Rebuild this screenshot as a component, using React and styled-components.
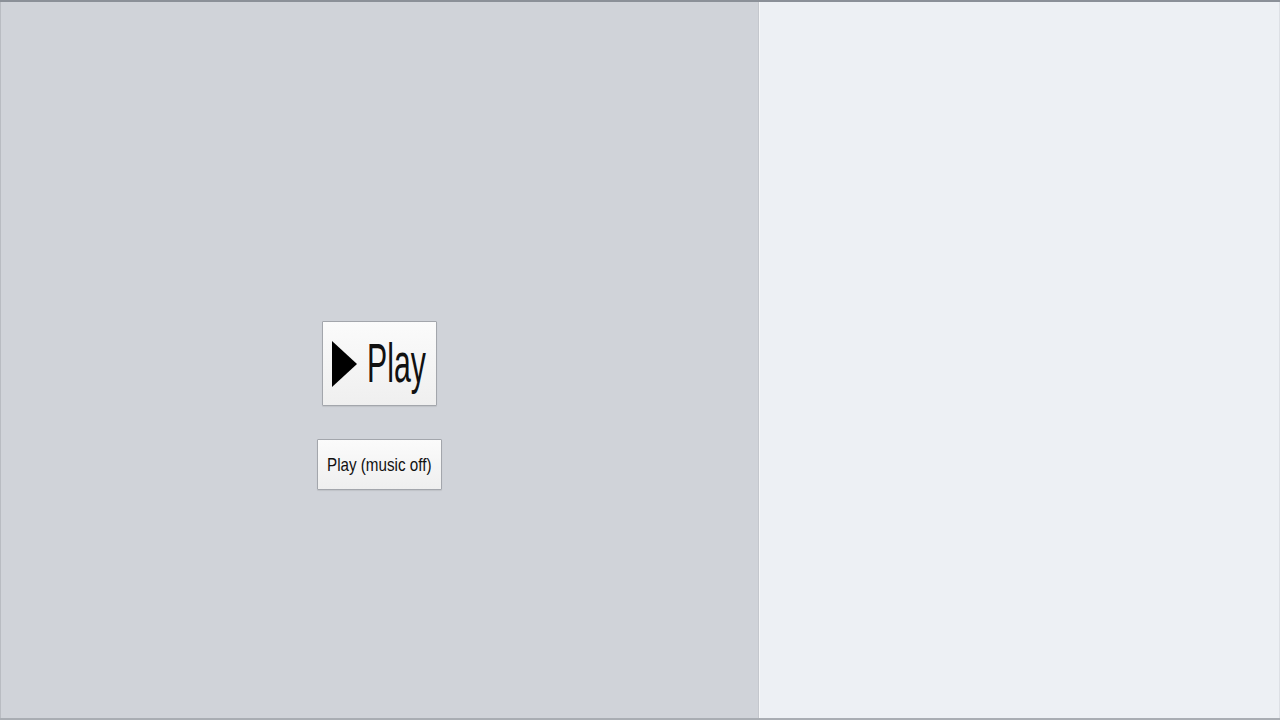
import React from "react";
import styled, { createGlobalStyle } from "styled-components";

const GlobalStyle = createGlobalStyle`
  html, body {
    margin: 0;
    padding: 0;
    height: 100%;
    overflow: hidden;
  }
  #root {
    height: 100%;
  }
`;

const Screen = styled.div`
  display: flex;
  width: 1280px;
  height: 720px;
  box-sizing: border-box;
  border-top: 2px solid #8b9098;
  border-bottom: 2px solid #a9adb3;
  font-family: "Liberation Sans", Arial, sans-serif;
`;

const GamePanel = styled.div`
  width: 759px;
  flex: none;
  box-sizing: border-box;
  border-left: 1px solid #b9bcc2;
  border-right: 1px solid #c4c7cd;
  background: #d0d3d9;
  display: flex;
  flex-direction: column;
  align-items: center;
  padding-top: 319px;
  gap: 33px;
`;

const SidePanel = styled.div`
  flex: 1;
  background: #edf0f4;
  border-left: 1px solid #f6f7f9;
  border-right: 1px solid #dde0e5;
`;

const Button = styled.button`
  display: flex;
  align-items: center;
  justify-content: ${({ $big }) => ($big ? "flex-start" : "center")};
  gap: 10px;
  box-sizing: border-box;
  width: ${({ $big }) => ($big ? "115px" : "125px")};
  height: ${({ $big }) => ($big ? "85px" : "51px")};
  padding: ${({ $big }) => ($big ? "0 0 0 9px" : "0")};
  border: 1px solid #a3a6ac;
  border-radius: 1px;
  background: linear-gradient(#fbfbfb, #efefef);
  box-shadow: 0 1px 1px rgba(0, 0, 0, 0.08);
  color: #111;
  font-family: inherit;
  cursor: pointer;
`;

const Label = styled.span`
  display: inline-block;
  width: ${({ $width }) => $width}px;
  white-space: nowrap;
  font-size: ${({ $size }) => $size}px;
  line-height: 1;
  transform: scaleX(${({ $scale }) => $scale});
  transform-origin: left center;
`;

const Triangle = styled.span`
  flex: none;
  width: 0;
  height: 0;
  border-top: 23px solid transparent;
  border-bottom: 23px solid transparent;
  border-left: 25px solid #000;
`;

export default function App() {
  return (
    <>
      <GlobalStyle />
      <Screen>
        <GamePanel>
          <Button $big>
            <Triangle />
            <Label $width={58} $size={55} $scale={0.55}>
              Play
            </Label>
          </Button>
          <Button>
            <Label $width={105} $size={19} $scale={0.8}>
              Play (music off)
            </Label>
          </Button>
        </GamePanel>
        <SidePanel />
      </Screen>
    </>
  );
}
